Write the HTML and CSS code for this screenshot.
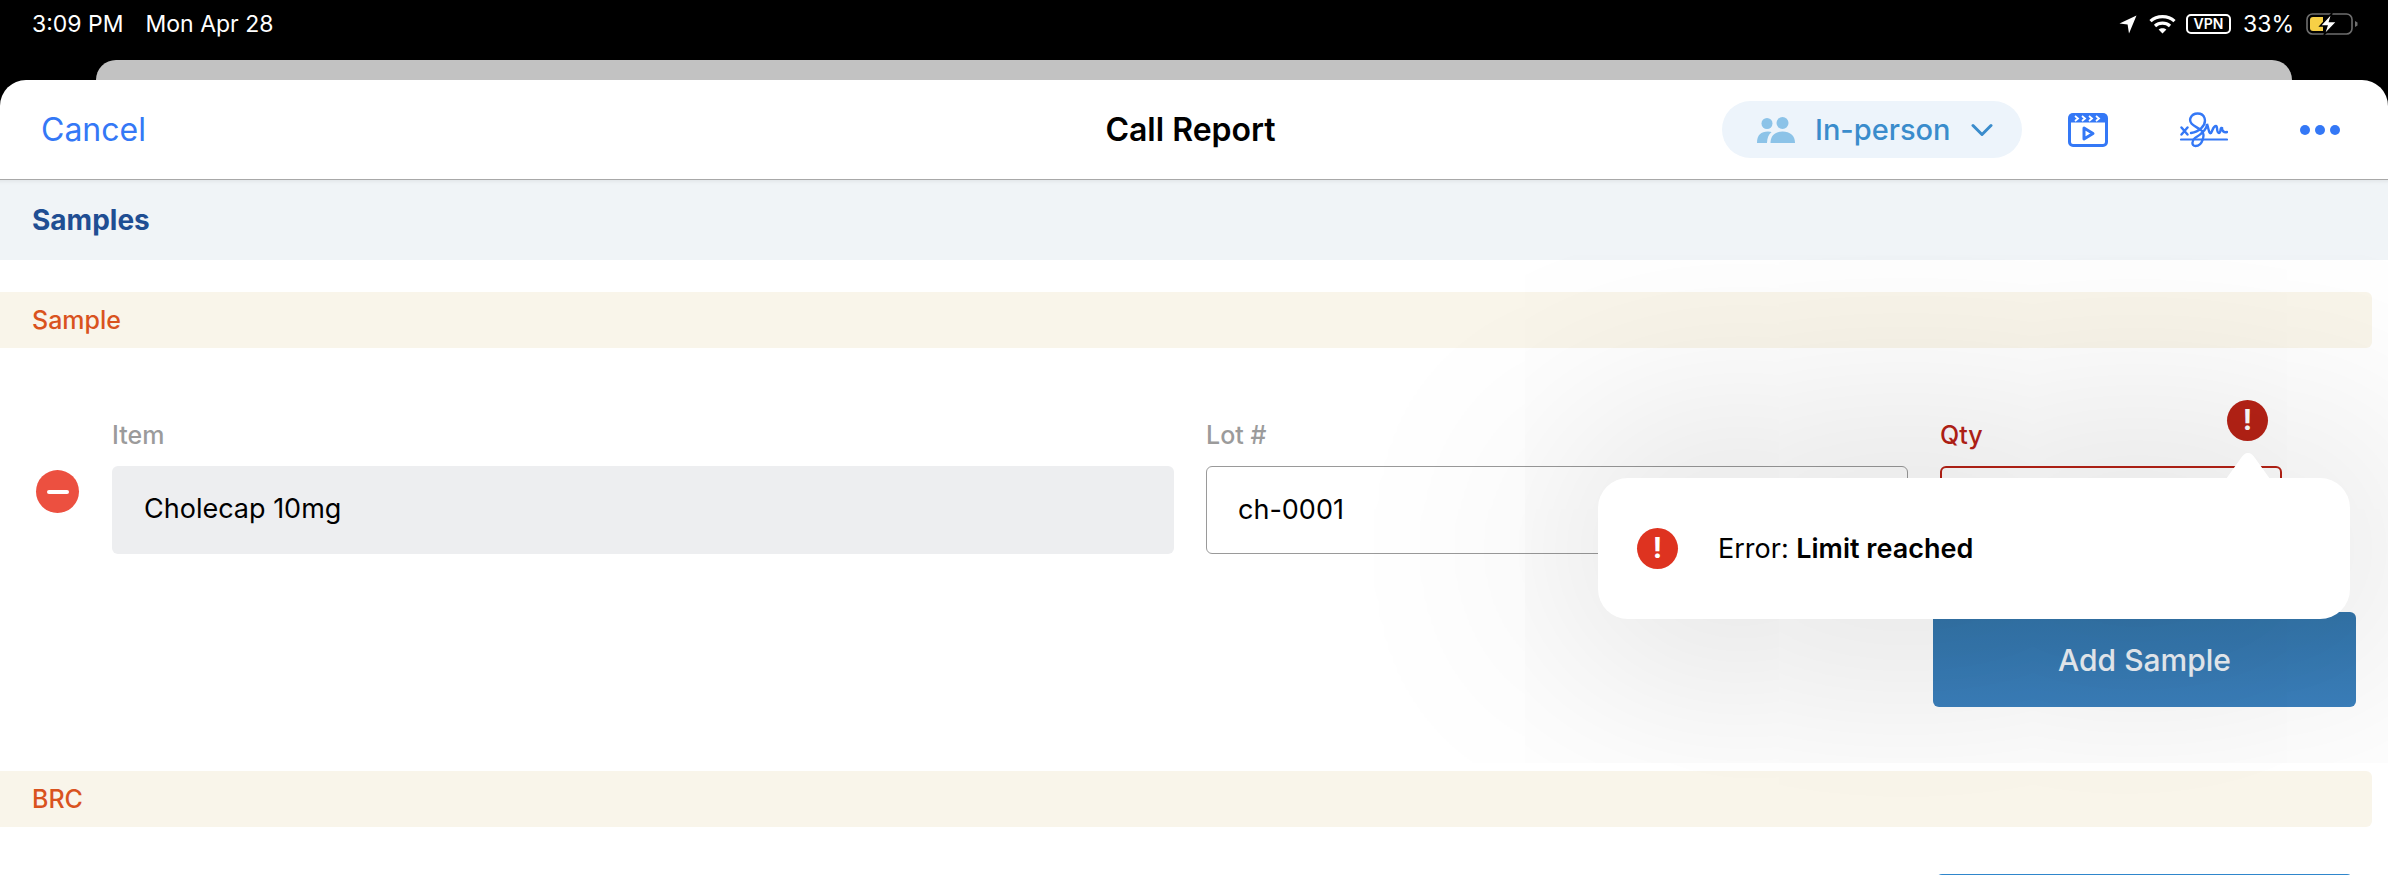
FILE: index.html
```html
<!DOCTYPE html>
<html lang="en">
<head>
  <meta charset="UTF-8">
  <title>Call Report</title>
  <link rel="stylesheet" href="styles.css">
</head>
<body>

<div class="status-bar">
  <div class="status-left">
    <span class="status-time">3:09 PM</span>
    <span>Mon Apr 28</span>
  </div>
  <div class="status-right">
    <svg class="icon-location" viewBox="0 0 18 19"><path d="M17.5 0.5 L0.5 8.6 L8.6 9.6 L10 18.5 Z" fill="#fff"/></svg>
    <svg class="icon-wifi" viewBox="0 0 27 20" fill="none" stroke="#fff" stroke-width="3.2"><path d="M1.5 7.2 C8 1 19 1 25.5 7.2"/><path d="M6 12 C10.2 8.2 16.8 8.2 21 12"/><path d="M13.5 19.5 L9.6 15.6 C11.8 13.7 15.2 13.7 17.4 15.6 Z" fill="#fff" stroke="none"/></svg>
    <span class="vpn-badge">VPN</span>
    <span class="status-pct">33%</span>
    <svg class="icon-battery" viewBox="0 0 52 22">
      <rect x="1" y="1" width="45" height="20" rx="5.5" fill="none" stroke="#6e6e6e" stroke-width="1.6"/>
      <path d="M4 7 a3 3 0 0 1 3-3 H15 V18 H7 a3 3 0 0 1-3-3 Z" fill="#f7d046"/>
      <path d="M15 4 H17 V18 H15 Z" fill="#f7d046"/>
      <path d="M49 8 L51.5 9.5 V12.5 L49 14 Z" fill="#6e6e6e"/>
      <path d="M26 0 L14 13 H21 L18 22 L31 8.5 H23.5 Z" fill="#fff" stroke="#000" stroke-width="1.4"/>
    </svg>
  </div>
</div>

<div class="peek-sheet"></div>

<div class="sheet">
  <div class="nav-bar">
    <a class="nav-cancel">Cancel</a>
    <div class="nav-title">Call Report</div>
    <div class="nav-actions">
      <div class="mode-pill">
        <svg class="icon-people" viewBox="0 0 38 26" fill="#8cc3e8">
          <circle cx="10" cy="6.5" r="5.5"/>
          <circle cx="25.5" cy="6" r="6"/>
          <path d="M0 26 C0 18 4 14.5 11 14.5 C12.5 14.5 13.6 14.7 14.6 15 C11.5 17.4 10.2 21 10 26 Z"/>
          <path d="M13.5 26 C13.5 18.5 18 14.5 25.5 14.5 C33 14.5 38 18.5 38 26 Z"/>
        </svg>
        <span class="mode-label">In-person</span>
        <svg class="icon-chevron" viewBox="0 0 22 14" fill="none" stroke="#3a8ccc" stroke-width="3" stroke-linecap="round" stroke-linejoin="round"><path d="M2 2.5 L11 11.5 L20 2.5"/></svg>
      </div>
      <svg class="icon-film" viewBox="0 0 40 34" fill="none">
        <rect x="1.5" y="1.5" width="37" height="31" rx="3.5" stroke="#3478f6" stroke-width="3"/>
        <rect x="1.5" y="1.5" width="37" height="8" fill="#3478f6"/>
        <path d="M7 3 L10 5.5 L7 8 M14 3 L17 5.5 L14 8 M21 3 L24 5.5 L21 8 M28 3 L31 5.5 L28 8" stroke="#fff" stroke-width="1.8"/>
        <path d="M16 15 L25 20.5 L16 26 Z" stroke="#3478f6" stroke-width="3" stroke-linejoin="round"/>
      </svg>
      <svg class="icon-sign" viewBox="0 0 48 36" fill="none" stroke="#3478f6" stroke-width="2.4" stroke-linecap="round">
        <path d="M1 27.5 H47" stroke-width="2.2"/>
        <path d="M1.5 15.5 L7.5 22.5 M7.5 15.5 L1.5 22.5"/>
        <path d="M11 21 C18 20 27 14 24.5 6 C22.5 0 13 0 10.500 6 C8 13 18 15 22 19 C25 22 23 34 15.500 34 C11 34 12 28 15 26 C20 23 27 18 27 12 C29 18 29 22 31 21 C33 18 33 14 36 14 C38 14 36 21 39 21 C41 21 40 15 42 16 C42 19 44 21 47 20"/>
      </svg>
      <div class="more-dots"><i></i><i></i><i></i></div>
    </div>
  </div>

  <div class="page-heading">Samples</div>

  <div class="section-band section-first">Sample</div>

  <div class="sample-row">
    <div class="remove-btn"><i></i></div>
    <div class="field field-item">
      <div class="field-label">Item</div>
      <div class="field-box field-readonly">Cholecap 10mg</div>
    </div>
    <div class="field field-lot">
      <div class="field-label">Lot #</div>
      <div class="field-box field-input">ch-0001</div>
    </div>
    <div class="field field-qty">
      <div class="field-label field-label-error">
        <span>Qty</span>
        <div class="error-dot error-dot-dark">!</div>
      </div>
      <div class="field-box field-error"></div>
    </div>
  </div>

  <div class="add-row">
    <button class="add-button">Add Sample</button>
  </div>

  <div class="section-band">BRC</div>

  <div class="add-row add-row-next">
    <div class="next-button"></div>
  </div>

  <!-- error popover -->
  <div class="popover">
    <div class="popover-arrow"></div>
    <div class="error-dot">!</div>
    <div class="popover-text">Error: <b>Limit reached</b></div>
  </div>
</div>

</body>
</html>
```

FILE: styles.css
```css
html, body {
  margin: 0;
  padding: 0;
}
body {
  width: 2388px;
  height: 875px;
  overflow: hidden;
  background-color: #000;
  font-family: Inter, "Liberation Sans", sans-serif;
  color: #000;
}

/* Status bar */
.status-bar {
  height: 60px;
  display: flex;
  justify-content: space-between;
  align-items: flex-start;
  padding: 11px 30px 0 32px;
  box-sizing: border-box;
  color: #fff;
  font-size: 23px;
  line-height: 26px;
}
.status-left {
  display: flex;
  gap: 22px;
}
.status-right {
  display: flex;
  align-items: center;
  height: 24px;
  margin-top: 1px;
}
.icon-location {
  width: 18px;
  height: 19px;
  margin-right: 12px;
}
.icon-wifi {
  width: 27px;
  height: 20px;
  margin-right: 10px;
}
.vpn-badge {
  width: 45px;
  height: 20px;
  box-sizing: border-box;
  border: 2px solid #fff;
  border-radius: 5px;
  font-size: 14px;
  font-weight: 600;
  line-height: 16px;
  text-align: center;
  margin-right: 12px;
}
.status-pct {
  margin-right: 12px;
}
.icon-battery {
  width: 52px;
  height: 22px;
}

.peek-sheet {
  height: 20px;
  margin: 0 96px;
  background-color: #c2c2c2;
  border-radius: 20px 20px 0 0;
}

/* Sheet */
.sheet {
  position: relative;
  height: 795px;
  overflow: hidden;
  background-color: #fff;
  border-radius: 26px 26px 0 0;
}
.nav-bar {
  height: 100px;
  box-sizing: border-box;
  display: grid;
  grid-template-columns: 1fr auto 1fr;
  align-items: center;
  padding: 0 48px 0 41px;
  border-bottom: 1px solid #a8a8a8;
}
.nav-cancel {
  color: #3478f6;
  font-size: 32px;
}
.nav-title {
  font-size: 32px;
  font-weight: 600;
}
.nav-actions {
  display: flex;
  justify-content: flex-end;
  align-items: center;
  margin-top: 0;
}
.mode-pill {
  width: 300px;
  height: 57px;
  box-sizing: border-box;
  display: flex;
  align-items: center;
  padding-left: 35px;
  background-color: #edf4fb;
  border-radius: 29px;
  margin-right: 46px;
}
.icon-people {
  width: 38px;
  height: 26px;
  margin-right: 20px;
}
.mode-label {
  color: #3a8ccc;
  font-size: 29px;
  font-weight: 500;
  margin-right: 20px;
}
.icon-chevron {
  width: 22px;
  height: 14px;
}
.icon-film {
  width: 40px;
  height: 34px;
  margin-right: 72px;
}
.icon-sign {
  width: 48px;
  height: 36px;
  margin-right: 72px;
}
.more-dots {
  display: flex;
  gap: 5px;
}
.more-dots i {
  width: 10px;
  height: 10px;
  border-radius: 50%;
  background-color: #3478f6;
}

.page-heading {
  height: 80px;
  box-sizing: border-box;
  padding-left: 32px;
  background-color: #f0f4f7;
  color: #1f4e93;
  font-size: 28px;
  font-weight: 700;
  line-height: 80px;
  box-shadow: inset 0 5px 4px -4px rgba(0, 0, 0, 0.08);
}

.section-band {
  height: 56px;
  margin-right: 16px;
  padding-left: 32px;
  background-color: #f9f5ea;
  border-radius: 0 6px 6px 0;
  color: #d9531e;
  font-size: 25px;
  font-weight: 500;
  line-height: 56px;
}
.section-first {
  margin-top: 32px;
}

/* Sample row */
.sample-row {
  display: flex;
  align-items: flex-start;
  padding: 72px 106px 0 36px;
}
.remove-btn {
  width: 43px;
  height: 43px;
  margin: 50px 33px 0 0;
  border-radius: 50%;
  background-color: #ec5040;
  display: flex;
  align-items: center;
  justify-content: center;
  flex: none;
}
.remove-btn i {
  width: 22px;
  height: 4px;
  border-radius: 2px;
  background-color: #fff;
}
.field {
  flex: none;
}
.field-item {
  width: 1062px;
  margin-right: 32px;
}
.field-lot {
  width: 702px;
  margin-right: 32px;
}
.field-qty {
  width: 342px;
}
.field-label {
  height: 46px;
  color: #9b9b9b;
  font-size: 25px;
  font-weight: 500;
  line-height: 30px;
}
.field-label-error {
  color: #b72216;
  display: flex;
  justify-content: space-between;
  padding-right: 14px;
}
.field-box {
  height: 88px;
  box-sizing: border-box;
  padding-left: 32px;
  border-radius: 6px;
  font-size: 27px;
  line-height: 86px;
}
.field-readonly {
  background-color: #edeef0;
}
.field-input {
  padding-left: 31px;
  border: 1.5px solid #9a9a9a;
}
.field-error {
  border: 2px solid #b72216;
}

.add-row {
  display: flex;
  justify-content: flex-end;
  padding: 58px 32px 64px 0;
}
.add-button {
  width: 423px;
  height: 95px;
  border: none;
  border-radius: 6px;
  background: linear-gradient(#3375aa, #3b80bd);
  color: #edf2f7;
  font-family: inherit;
  font-size: 30px;
  font-weight: 500;
}
.add-row-next {
  padding: 47px 35px 0 0;
}
.next-button {
  width: 417px;
  height: 10px;
  border-radius: 6px 6px 0 0;
  background-color: #2f86cc;
}

/* Error popover */
.error-dot {
  width: 41px;
  height: 41px;
  border-radius: 50%;
  background-color: #de3320;
  color: #fff;
  font-size: 28px;
  font-weight: 700;
  line-height: 41px;
  text-align: center;
  flex: none;
}
.error-dot-dark {
  background-color: #b72216;
  margin-top: -20px;
}
.popover {
  position: absolute;
  left: 1598px;
  top: 398px;
  width: 752px;
  height: 141px;
  box-sizing: border-box;
  display: flex;
  align-items: center;
  padding: 0 0 0 39px;
  background-color: #fff;
  border-radius: 30px;
  box-shadow: 0 0 240px 30px rgba(0, 0, 0, 0.16);
}
.popover-arrow {
  position: absolute;
  left: 628px;
  top: -25px;
  width: 44px;
  height: 44px;
  background-color: #fff;
  clip-path: path("M22 0 C25 0 27 2 29 5 L44 26 H0 L15 5 C17 2 19 0 22 0 Z");
}
.popover-text {
  margin-left: 40px;
  font-size: 27px;
}
.popover-text b {
  font-weight: 600;
}
```
